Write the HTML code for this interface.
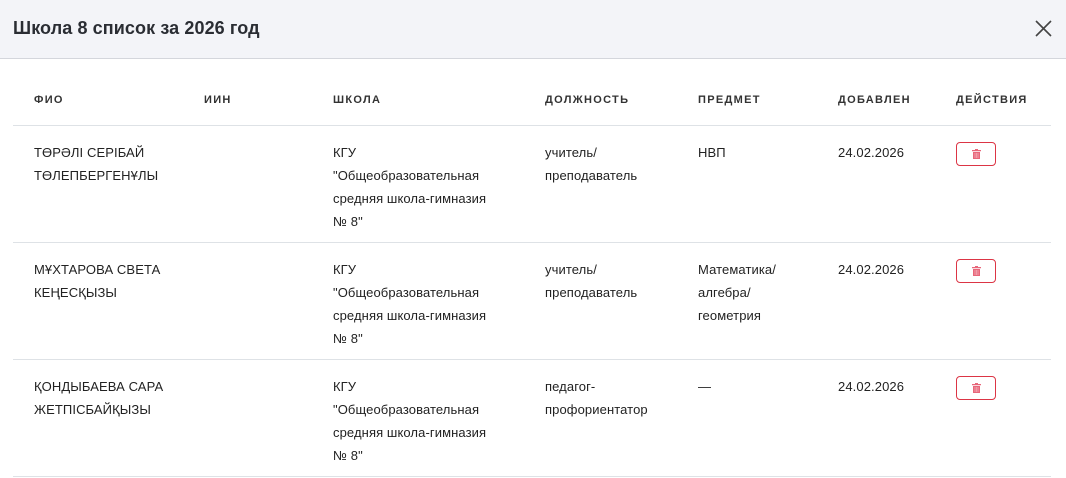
<!DOCTYPE html>
<html><head><meta charset="utf-8"><style>
*{box-sizing:border-box;margin:0;padding:0}
body{width:1066px;height:478px;overflow:hidden;background:#fff;font-family:"Liberation Sans","DejaVu Sans",sans-serif;color:#212529;position:relative}
.hd{position:absolute;left:0;top:0;width:1066px;height:59px;background:#f3f4f8;border-bottom:1px solid #d4d6dc}
.hd h1{position:absolute;left:13px;top:18px;font-size:18px;font-weight:bold;color:#2a2d33;letter-spacing:0.1px}
.x{position:absolute;left:1035px;top:20px}
.th{position:absolute;top:94px;font-size:11px;font-weight:bold;letter-spacing:1.3px;color:#333}
.line{position:absolute;left:13px;width:1038px;height:1px;background:#dee2e6}
.c{position:absolute;font-size:13px;line-height:23px;color:#222;letter-spacing:0.1px}
.btn{position:absolute;left:956px;width:40px;height:24px;border:1px solid #dc3545;border-radius:4px}
.btn svg{position:absolute;left:15px;top:6px}
</style></head><body>
<div class="hd"><h1>Школа 8 список за 2026 год</h1>
<svg class="x" width="17" height="17" viewBox="0 0 17 17"><path d="M1 1L16 16M16 1L1 16" stroke="#444" stroke-width="1.6"/></svg></div>
<div class="th" style="left:34px">ФИО</div>
<div class="th" style="left:204px">ИИН</div>
<div class="th" style="left:333px">ШКОЛА</div>
<div class="th" style="left:545px">ДОЛЖНОСТЬ</div>
<div class="th" style="left:698px">ПРЕДМЕТ</div>
<div class="th" style="left:838px">ДОБАВЛЕН</div>
<div class="th" style="left:956px">ДЕЙСТВИЯ</div>
<div class="line" style="top:125px"></div>
<div class="line" style="top:242px"></div>
<div class="line" style="top:359px"></div>
<div class="line" style="top:476px"></div>

<div class="c" style="left:34px;top:141px">ТӨРӘЛІ СЕРІБАЙ<br>ТӨЛЕПБЕРГЕНҰЛЫ</div>
<div class="c" style="left:333px;top:141px">КГУ<br>"Общеобразовательная<br>средняя школа-гимназия<br>№ 8"</div>
<div class="c" style="left:545px;top:141px">учитель/<br>преподаватель</div>
<div class="c" style="left:698px;top:141px">НВП</div>
<div class="c" style="left:838px;top:141px">24.02.2026</div>
<div class="btn" style="top:142px"><svg width="9" height="10" viewBox="0 0 9 10"><path d="M0 1h9v1.2H0zM3 0h3v1H3zM1 3h7v7H1z" fill="#e8677a"/><path d="M3 4v5M4.5 4v5M6 4v5" stroke="#f6c0c8" stroke-width="0.6"/></svg></div>

<div class="c" style="left:34px;top:258px">МҰХТАРОВА СВЕТА<br>КЕҢЕСҚЫЗЫ</div>
<div class="c" style="left:333px;top:258px">КГУ<br>"Общеобразовательная<br>средняя школа-гимназия<br>№ 8"</div>
<div class="c" style="left:545px;top:258px">учитель/<br>преподаватель</div>
<div class="c" style="left:698px;top:258px">Математика/<br>алгебра/<br>геометрия</div>
<div class="c" style="left:838px;top:258px">24.02.2026</div>
<div class="btn" style="top:259px"><svg width="9" height="10" viewBox="0 0 9 10"><path d="M0 1h9v1.2H0zM3 0h3v1H3zM1 3h7v7H1z" fill="#e8677a"/><path d="M3 4v5M4.5 4v5M6 4v5" stroke="#f6c0c8" stroke-width="0.6"/></svg></div>

<div class="c" style="left:34px;top:375px">ҚОНДЫБАЕВА САРА<br>ЖЕТПІСБАЙҚЫЗЫ</div>
<div class="c" style="left:333px;top:375px">КГУ<br>"Общеобразовательная<br>средняя школа-гимназия<br>№ 8"</div>
<div class="c" style="left:545px;top:375px">педагог-<br>профориентатор</div>
<div class="c" style="left:698px;top:375px">—</div>
<div class="c" style="left:838px;top:375px">24.02.2026</div>
<div class="btn" style="top:376px"><svg width="9" height="10" viewBox="0 0 9 10"><path d="M0 1h9v1.2H0zM3 0h3v1H3zM1 3h7v7H1z" fill="#e8677a"/><path d="M3 4v5M4.5 4v5M6 4v5" stroke="#f6c0c8" stroke-width="0.6"/></svg></div>
</body></html>
